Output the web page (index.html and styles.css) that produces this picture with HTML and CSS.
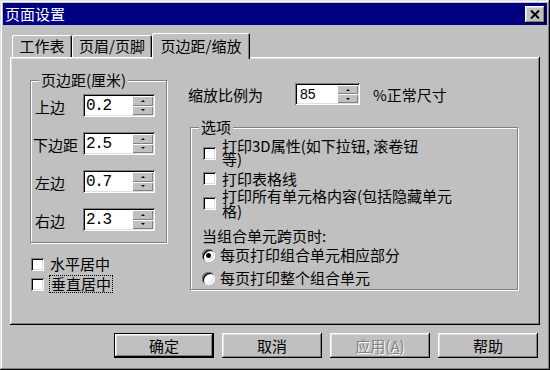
FILE: index.html
```html
<!DOCTYPE html>
<html lang="zh-CN">
<head>
<meta charset="utf-8">
<title>页面设置</title>
<link rel="stylesheet" href="styles.css">
</head>
<body>
<div class="window">
  <div class="titlebar">
    <span class="title">页面设置</span>
    <span class="close"><svg width="10" height="9" viewBox="0 0 10 9"><path d="M1 0.5L9 8.5M9 0.5L1 8.5" stroke="#000" stroke-width="2"/></svg></span>
  </div>
  <div class="tabs">
    <div class="tab t1">工作表</div>
    <div class="tab t2">页眉/页脚</div>
    <div class="tab t3 active">页边距/缩放</div>
  </div>
  <div class="panel">
    <div class="col-left">
      <div class="group margins">
        <span class="group-title">页边距(厘米)</span>
        <div class="margin-grid">
          <span class="lbl">上边</span>
          <div class="spin w72"><span class="val mono">0.2</span><span class="spin-btns"><i class="up"></i><i class="dn"></i></span></div>
          <span class="lbl wide">下边距</span>
          <div class="spin w72"><span class="val mono">2.5</span><span class="spin-btns"><i class="up"></i><i class="dn"></i></span></div>
          <span class="lbl">左边</span>
          <div class="spin w72"><span class="val mono">0.7</span><span class="spin-btns"><i class="up"></i><i class="dn"></i></span></div>
          <span class="lbl">右边</span>
          <div class="spin w72"><span class="val mono">2.3</span><span class="spin-btns"><i class="up"></i><i class="dn"></i></span></div>
        </div>
      </div>
      <div class="center-opts">
        <div class="cb-row"><span class="cb"></span><span class="cb-text">水平居中</span></div>
        <div class="cb-row"><span class="cb"></span><span class="cb-text focus">垂直居中</span></div>
      </div>
    </div>
    <div class="col-right">
      <div class="scale-row">
        <span class="scale-lbl">缩放比例为</span>
        <div class="spin w65 scale-spin"><span class="val sans">85</span><span class="spin-btns"><i class="up"></i><i class="dn"></i></span></div>
        <span class="scale-unit">%正常尺寸</span>
      </div>
      <div class="group options">
        <span class="group-title">选项</span>
        <div class="opt opt1"><span class="cb"></span><span class="opt-text lh13">打印3D属性(如下拉钮, 滚卷钮<br>等)</span></div>
        <div class="opt opt2"><span class="cb"></span><span class="opt-text">打印表格线</span></div>
        <div class="opt opt3"><span class="cb"></span><span class="opt-text lh15">打印所有单元格内容(包括隐藏单元<br>格)</span></div>
        <div class="opt-head">当组合单元跨页时:</div>
        <div class="radio-row r1"><span class="radio checked"></span><span class="radio-text">每页打印组合单元相应部分</span></div>
        <div class="radio-row r2"><span class="radio"></span><span class="radio-text">每页打印整个组合单元</span></div>
      </div>
    </div>
  </div>
  <div class="buttons">
    <div class="btn default">确定</div>
    <div class="btn">取消</div>
    <div class="btn disabled">应用(<u>A</u>)</div>
    <div class="btn">帮助</div>
  </div>
</div>
</body>
</html>
```
FILE: styles.css
```css
* { box-sizing: border-box; }
html, body { margin: 0; padding: 0; }
body {
  width: 550px;
  height: 370px;
  overflow: hidden;
  background: #c0c0c0;
  font-family: "Noto Sans CJK SC", "Noto Sans", sans-serif;
  font-size: 15px;
  color: #000;
}
.window {
  width: 550px;
  height: 370px;
  padding: 3px;
  background: #c0c0c0;
  display: flex;
  flex-direction: column;
  box-shadow: inset -1px -1px #000, inset 1px 1px #dfdfdf, inset -2px -2px #808080, inset 2px 2px #fff;
}
.titlebar {
  flex: none;
  height: 22px;
  background: #000080;
  color: #fff;
  display: flex;
  align-items: center;
  justify-content: space-between;
  padding: 0 2px;
}
.title { line-height: 22px; }
.close {
  width: 20px;
  height: 17px;
  background: #c0c0c0;
  display: flex;
  align-items: center;
  justify-content: center;
  box-shadow: inset -1px -1px #000, inset 1px 1px #fff, inset -2px -2px #808080, inset 2px 2px #dfdfdf;
}
.close svg { display: block; }

/* tabs */
.tabs {
  flex: none;
  display: flex;
  align-items: flex-end;
  height: 24px;
  margin: 8px 0 0 9px;
}
.tab {
  height: 22px;
  line-height: 22px;
  text-align: center;
  background: #c0c0c0;
  border-radius: 2px 2px 0 0;
  box-shadow: inset 1px 1px #fff, inset -1px 0 #000, inset -2px 0 #808080;
}
.t1 { width: 60px; }
.t2 { width: 80px; }
.t3 { width: 98px; }
.tab.active {
  height: 26px;
  line-height: 25px;
  margin-bottom: -2px;
  position: relative;
  z-index: 1;
}

/* panel */
.panel {
  flex: none;
  height: 268px;
  margin: 0 7px;
  display: flex;
  align-items: flex-start;
  box-shadow: inset -1px -1px #000, inset 1px 1px #fff, inset -2px -2px #808080, inset 2px 2px #dfdfdf;
}
.col-left {
  width: 137px;
  margin: 23px 0 0 20px;
}
.col-right {
  margin: 26px 0 0 21px;
}

/* group boxes */
.group {
  position: relative;
  border: 1px solid #808080;
  box-shadow: inset 1px 1px #fff, 1px 1px #fff;
}
.group-title {
  position: absolute;
  top: -9px;
  left: 8px;
  padding: 0 2px;
  line-height: 16px;
  background: #c0c0c0;
}
.margins {
  width: 137px;
  height: 163px;
}
.margin-grid {
  display: grid;
  grid-template-columns: 48px 72px;
  grid-auto-rows: 23px;
  row-gap: 15px;
  align-items: center;
  padding: 13px 0 0 4px;
}
.lbl { line-height: 16px; padding-top: 2px; }
.lbl.wide { margin-left: -2px; }

/* spin inputs */
.spin {
  display: flex;
  height: 23px;
  padding: 2px;
  background: #fff;
  box-shadow: inset 1px 1px #808080, inset -1px -1px #fff, inset 2px 2px #000, inset -2px -2px #dfdfdf;
}
.w72 { width: 72px; }
.w65 { width: 65px; height: 22px; }
.val {
  flex: 1;
  display: flex;
  align-items: center;
  padding-left: 1px;
}
.mono {
  font-family: "Liberation Mono", monospace;
  font-size: 16px;
  letter-spacing: -1.4px;
}
.sans {
  font-family: "Liberation Sans", sans-serif;
  font-size: 14px;
  padding-left: 3px;
}
.spin-btns {
  width: 21px;
  display: flex;
  flex-direction: column;
}
.spin-btns i {
  flex: 1;
  display: flex;
  align-items: center;
  justify-content: center;
  background: #c0c0c0;
  box-shadow: inset 1px 1px #fff, inset -1px -1px #808080;
}
.spin-btns i::before {
  content: "";
  width: 0;
  height: 0;
  border-left: 2px solid transparent;
  border-right: 2px solid transparent;
}
.spin-btns i.up::before { border-bottom: 2px solid #000; }
.spin-btns i.dn::before { border-top: 2px solid #000; }

/* checkboxes */
.cb {
  flex: none;
  width: 13px;
  height: 13px;
  background: #fff;
  box-shadow: inset 1px 1px #808080, inset -1px -1px #fff, inset 2px 2px #000, inset -2px -2px #dfdfdf;
}
.center-opts { margin: 11px 0 0 1px; }
.cb-row {
  display: flex;
  align-items: center;
  height: 20px;
}
.cb-text { margin-left: 6px; line-height: 16px; }
.cb-text.focus {
  margin-left: 5px;
  border: 1px dotted #000;
  padding: 0 1px;
  line-height: 16px;
}

/* scale row */
.scale-row {
  display: flex;
  align-items: center;
  height: 22px;
}
.scale-spin { margin-left: 32px; }
.scale-unit { margin-left: 13px; }

/* options */
.options {
  width: 328px;
  height: 163px;
  margin: 22px 0 0 2px;
  padding: 11px 0 0 12px;
}
.opt {
  display: flex;
  align-items: center;
}
.opt-text { margin-left: 6px; line-height: 15px; }
.opt-text.lh13 { line-height: 13px; }
.opt-text.lh15 { line-height: 15px; }
.opt1 { height: 26px; }
.opt1 .cb { margin-top: 3px; }
.opt2 { height: 15px; margin-top: 6px; }
.opt3 { height: 30px; margin-top: 2px; }
.opt-head {
  height: 16px;
  line-height: 16px;
  margin: 10px 0 0 -1px;
}
.radio-row {
  display: flex;
  align-items: center;
  height: 16px;
  margin-left: -1px;
}
.r1 { margin-top: 3px; }
.r2 { margin-top: 7px; }
.radio {
  flex: none;
  position: relative;
  width: 13px;
  height: 13px;
  border-radius: 50%;
  background: #fff;
  box-shadow: inset 1px 1px #808080, inset -1px -1px #fff, inset 2px 2px #000, inset -2px -2px #dfdfdf;
}
.radio.checked::after {
  content: "";
  position: absolute;
  left: 4px;
  top: 4px;
  width: 5px;
  height: 5px;
  border-radius: 50%;
  background: #000;
}
.radio-text { margin-left: 5px; line-height: 16px; }

/* buttons */
.buttons {
  flex: none;
  display: flex;
  justify-content: flex-end;
  gap: 8px;
  margin: 8px 9px 0 0;
}
.btn {
  width: 100px;
  height: 25px;
  display: flex;
  align-items: center;
  justify-content: center;
  background: #c0c0c0;
  box-shadow: inset -1px -1px #000, inset 1px 1px #fff, inset -2px -2px #808080, inset 2px 2px #dfdfdf;
}
.btn.default {
  border: 1px solid #000;
}
.btn.disabled {
  color: #808080;
  text-shadow: 1px 1px #fff;
}
.btn u { text-decoration: underline; }
```
